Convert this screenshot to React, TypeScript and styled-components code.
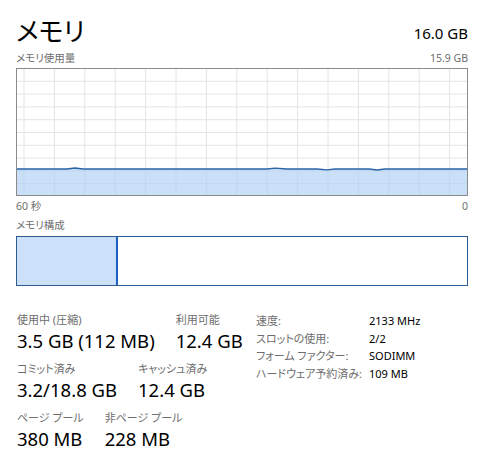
import React from "react";
import styled, { createGlobalStyle } from "styled-components";

const Global = createGlobalStyle`
  html, body { margin: 0; padding: 0; background: #ffffff; }
  body {
    font-family: "Noto Sans", "Noto Sans CJK JP", sans-serif;
    color: #000;
    font-feature-settings: "palt";
  }
`;

const Page = styled.div`
  width: 452px;
  padding: 0 21px 0 16px;
  display: flex;
  flex-direction: column;
`;

const Header = styled.div`
  display: flex;
  justify-content: space-between;
  align-items: flex-end;
  height: 45px;
`;

const Title = styled.div`
  font-family: "Noto Sans CJK JP", sans-serif;
  font-size: 26px;
  line-height: 30px;
`;

const Total = styled.div`
  font-size: 15px;
  line-height: 20px;
  padding-bottom: 2px;
`;

const SmallRow = styled.div<{ $mt?: number }>`
  display: flex;
  justify-content: space-between;
  font-size: 10.5px;
  line-height: 14px;
  color: #6d6d6d;
  margin-top: ${(p) => p.$mt ?? 0}px;
`;

const GraphBox = styled.div`
  height: 128px;
  border: 1px solid #8b8b8b;
  box-sizing: border-box;
  margin-top: 3px;
  overflow: hidden;
`;

const CompBar = styled.div`
  height: 50px;
  margin-top: 4px;
  border: 1px solid #2b5b8f;
  box-sizing: border-box;
  display: flex;
`;

const CompUsed = styled.div`
  width: 99px;
  background: #cce0fa;
  border-right: 2px solid #1d5fc0;
`;

const Stats = styled.div`
  display: grid;
  grid-template-columns: 240px 1fr;
  align-items: start;
  margin-top: 26px;
`;

const LeftStats = styled.div`
  display: flex;
  flex-direction: column;
  padding-left: 1px;
`;

const StatRow = styled.div`
  display: flex;
  gap: 21px;
  margin-bottom: 8.5px;
`;

const Stat = styled.div`
  display: flex;
  flex-direction: column;
`;

const StatLabel = styled.div`
  font-size: 11px;
  line-height: 15px;
  color: #6d6d6d;
  white-space: nowrap;
`;

const StatValue = styled.div`
  font-size: 18.5px;
  line-height: 24px;
  white-space: nowrap;
  margin-top: 1.5px;
`;

const InfoGrid = styled.div`
  display: grid;
  grid-template-columns: 113px auto;
  row-gap: 3px;
  padding-top: 2px;
  font-size: 11px;
  line-height: 14.5px;
`;

const InfoLabel = styled.div`
  color: #6d6d6d;
  white-space: nowrap;
`;

const InfoValue = styled.div`
  color: #000;
  white-space: nowrap;
`;

function Graph() {
  const W = 450;
  const H = 126;
  const vx: number[] = [];
  for (let x = 7; x < W; x += 30.4) vx.push(x);
  const hy: number[] = [];
  for (let i = 1; i < 10; i++) hy.push(i * 12.8 - 0.5);
  const top = 100;
  const pts = `0,${top} 50,${top} 58,${top - 1} 66,${top} 250,${top} 258,${top - 0.8} 270,${top} 300,${top} 310,${top + 0.8} 318,${top} 352,${top} 360,${top + 1} 368,${top} ${W},${top}`;
  return (
    <svg width={W} height={H} style={{ display: "block" }}>
      {vx.map((x) => (
        <line key={"v" + x} x1={x} x2={x} y1={0} y2={H} stroke="#e4e4e4" strokeWidth={1} />
      ))}
      {hy.map((y) => (
        <line key={"h" + y} x1={0} x2={W} y1={y} y2={y} stroke="#e4e4e4" strokeWidth={1} />
      ))}
      <polygon points={`${pts} ${W},${H} 0,${H}`} fill="#a9cdf5" fillOpacity={0.62} />
      <polyline points={pts} fill="none" stroke="#2a63a8" strokeWidth={1.3} />
    </svg>
  );
}

export default function App() {
  return (
    <>
      <Global />
      <Page>
        <Header>
          <Title>メモリ</Title>
          <Total>16.0 GB</Total>
        </Header>
        <SmallRow $mt={6}>
          <span>メモリ使用量</span>
          <span>15.9 GB</span>
        </SmallRow>
        <GraphBox>
          <Graph />
        </GraphBox>
        <SmallRow $mt={3}>
          <span>60 秒</span>
          <span>0</span>
        </SmallRow>
        <SmallRow $mt={5}>
          <span>メモリ構成</span>
        </SmallRow>
        <CompBar>
          <CompUsed />
        </CompBar>
        <Stats>
          <LeftStats>
            <StatRow>
              <Stat>
                <StatLabel>使用中 (圧縮)</StatLabel>
                <StatValue>3.5 GB (112 MB)</StatValue>
              </Stat>
              <Stat>
                <StatLabel>利用可能</StatLabel>
                <StatValue>12.4 GB</StatValue>
              </Stat>
            </StatRow>
            <StatRow>
              <Stat>
                <StatLabel>コミット済み</StatLabel>
                <StatValue>3.2/18.8 GB</StatValue>
              </Stat>
              <Stat>
                <StatLabel>キャッシュ済み</StatLabel>
                <StatValue>12.4 GB</StatValue>
              </Stat>
            </StatRow>
            <StatRow>
              <Stat>
                <StatLabel>ページ プール</StatLabel>
                <StatValue>380 MB</StatValue>
              </Stat>
              <Stat>
                <StatLabel>非ページ プール</StatLabel>
                <StatValue>228 MB</StatValue>
              </Stat>
            </StatRow>
          </LeftStats>
          <InfoGrid>
            <InfoLabel>速度:</InfoLabel>
            <InfoValue>2133 MHz</InfoValue>
            <InfoLabel>スロットの使用:</InfoLabel>
            <InfoValue>2/2</InfoValue>
            <InfoLabel>フォーム ファクター:</InfoLabel>
            <InfoValue>SODIMM</InfoValue>
            <InfoLabel>ハードウェア予約済み:</InfoLabel>
            <InfoValue>109 MB</InfoValue>
          </InfoGrid>
        </Stats>
      </Page>
    </>
  );
}
